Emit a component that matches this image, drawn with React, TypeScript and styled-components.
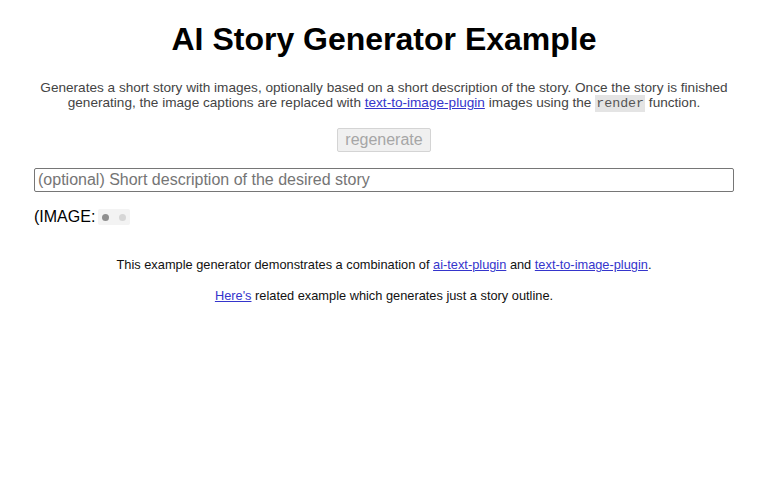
import styled, { createGlobalStyle } from 'styled-components'

const GlobalStyle = createGlobalStyle`
  body {
    margin: 0;
    background: #fff;
    font-family: "Liberation Sans", Arial, sans-serif;
    color: #000;
  }
`

const Page = styled.main`
  max-width: 700px;
  margin: 0 auto;
  padding-top: 19px;
  display: flex;
  flex-direction: column;
  align-items: stretch;
`

const Title = styled.h1`
  margin: 0;
  text-align: center;
  font-size: 32px;
  line-height: 40px;
  font-weight: 700;
`

const Intro = styled.p`
  margin: 21px 0 0;
  text-align: center;
  font-size: 13.6px;
  line-height: 15px;
  color: #444;
`

const Code = styled.code`
  font-family: "Liberation Mono", "Courier New", monospace;
  font-size: 13.3px;
  background: #e4e4e4;
  color: #555;
  padding: 1px 1px;
`

const Link = styled.a`
  color: #3535cc;
  text-decoration: underline;
`

const Controls = styled.div`
  display: flex;
  justify-content: center;
  margin-top: 17px;
`

const RegenerateButton = styled.button`
  font-family: "Liberation Sans", Arial, sans-serif;
  font-size: 16px;
  line-height: 18px;
  height: 24px;
  padding: 0 7px;
  color: #a6a6a6;
  background: #f0f0f0;
  border: 1px solid #d4d4d4;
  border-radius: 2px;
`

const StoryInput = styled.input`
  margin-top: 16px;
  box-sizing: border-box;
  width: 100%;
  height: 24px;
  padding: 0 3px;
  border: 1px solid #767676;
  border-radius: 2px;
  font-family: "Liberation Sans", Arial, sans-serif;
  font-size: 16px;
  color: #000;

  &::placeholder {
    color: #757575;
  }
`

const Story = styled.div`
  margin-top: 16px;
  display: flex;
  align-items: center;
  font-size: 16px;
  line-height: 18px;
`

const Loader = styled.span`
  display: inline-flex;
  align-items: center;
  gap: 10px;
  margin-left: 3px;
  height: 16px;
  padding: 0 4px;
  background: #f3f3f3;
  border-radius: 2px;
`

const Dot = styled.span<{ $tone: string }>`
  width: 7px;
  height: 7px;
  border-radius: 50%;
  background: ${(p) => p.$tone};
`

const Note = styled.p<{ $gap: number }>`
  margin: ${(p) => p.$gap}px 0 0;
  text-align: center;
  font-size: 12.8px;
  line-height: 15px;
  color: #111;
`

export default function App() {
  return (
    <>
      <GlobalStyle />
      <Page>
        <Title>AI Story Generator Example</Title>
        <Intro>
          Generates a short story with images, optionally based on a short description of the story. Once the
          story is finished generating, the image captions are replaced with{' '}
          <Link href="#">text-to-image-plugin</Link> images using the <Code>render</Code> function.
        </Intro>
        <Controls>
          <RegenerateButton disabled>regenerate</RegenerateButton>
        </Controls>
        <StoryInput placeholder="(optional) Short description of the desired story" />
        <Story>
          (IMAGE:
          <Loader>
            <Dot $tone="#8f8f8f" />
            <Dot $tone="#d6d6d6" />
          </Loader>
        </Story>
        <Note $gap={31}>
          This example generator demonstrates a combination of <Link href="#">ai-text-plugin</Link> and{' '}
          <Link href="#">text-to-image-plugin</Link>.
        </Note>
        <Note $gap={16}>
          <Link href="#">Here's</Link> related example which generates just a story outline.
        </Note>
      </Page>
    </>
  )
}
